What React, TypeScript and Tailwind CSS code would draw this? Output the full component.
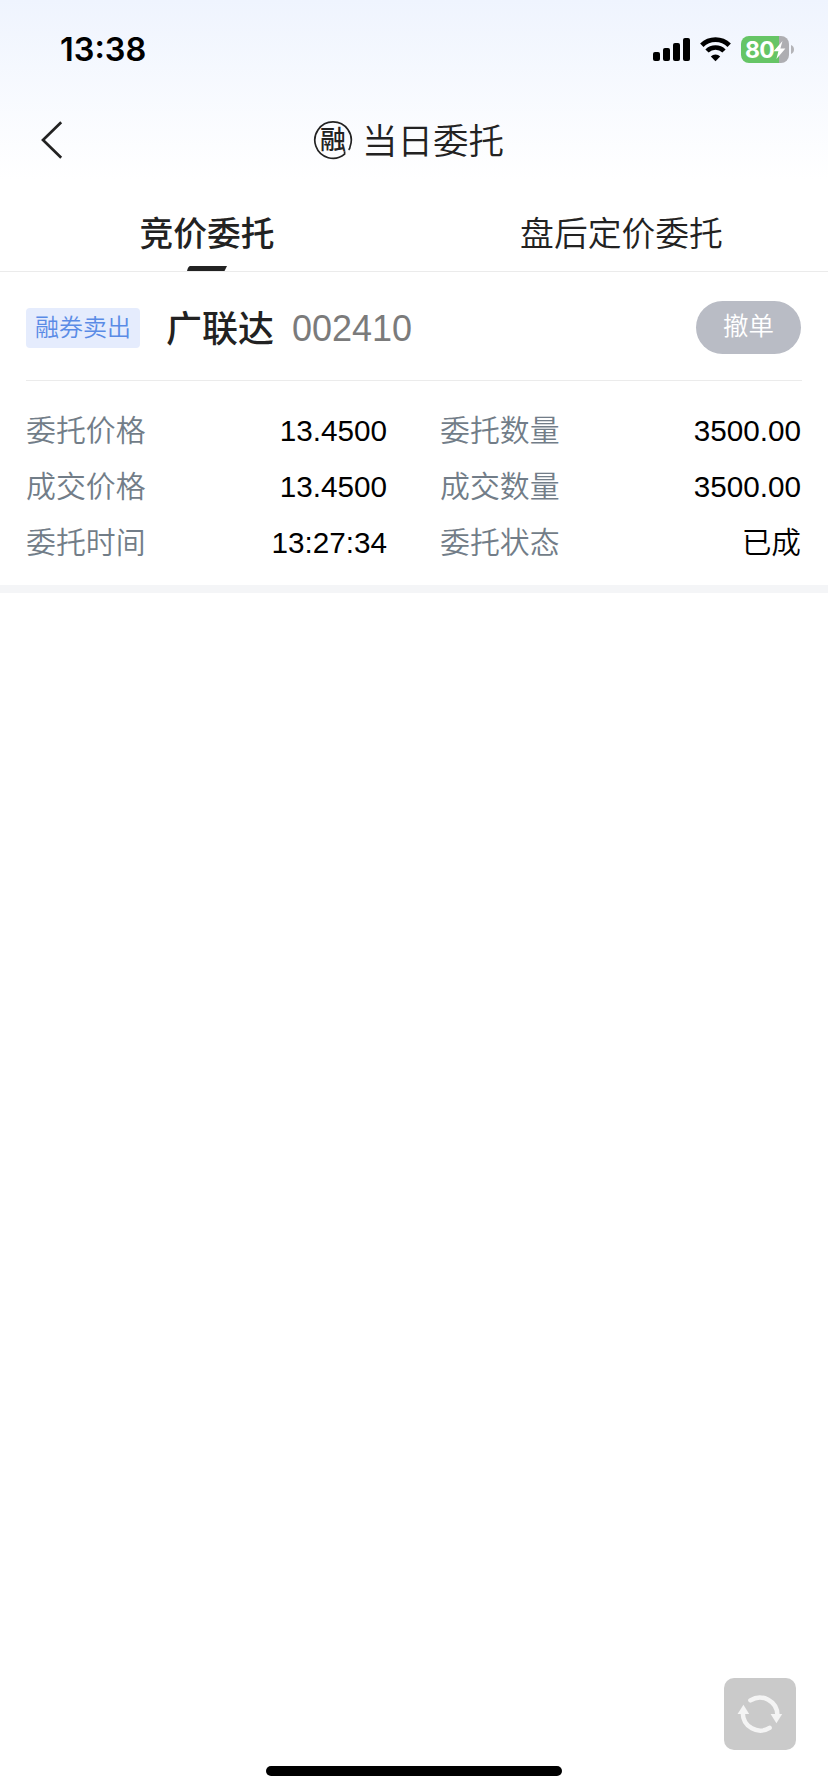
import React from "react";

const CJK = "font-['Liberation_Sans','Noto_Sans_CJK_SC',sans-serif]";

function StatusBar() {
  return (
    <div className="flex h-[100px] items-start justify-between pl-[60px] pr-[34px]">
      <span className="mt-[30px] font-['Inter',sans-serif] text-[32.5px] font-semibold leading-[40px] text-black">
        13:38
      </span>
      <div className="mt-[36px] flex items-start">
        <svg className="mt-[2px]" width="37" height="23" viewBox="0 0 37 23">
          <rect x="0" y="14" width="7" height="9" rx="2" />
          <rect x="10" y="10" width="7" height="13" rx="2" />
          <rect x="20" y="5" width="7" height="18" rx="2" />
          <rect x="30" y="0" width="7" height="23" rx="2" />
        </svg>
        <svg className="ml-[9px]" width="33" height="26" viewBox="0 0 33 26" fill="none" stroke="#000">
          <path d="M2.8 9.2A19.6 19.6 0 0 1 30.2 9.2" strokeWidth="4.8" />
          <path d="M8 15A12 12 0 0 1 25 15" strokeWidth="4.6" />
          <path d="M16.5 25.2L11.8 20.4A6.6 6.6 0 0 1 21.2 20.4Z" fill="#000" stroke="none" />
        </svg>
        <div className="ml-[9px] flex h-[27px] w-[48px] items-center overflow-hidden rounded-[8px] bg-[linear-gradient(to_right,#66c566_38px,#aeaeb2_38px)] pl-[4px]">
          <span className="pt-[1px] font-['Inter',sans-serif] text-[23px] font-bold leading-[27px] tracking-[-0.8px] text-white">
            80
          </span>
          <svg className="-ml-[1px]" width="13" height="20" viewBox="0 0 13 20">
            <path d="M9.5 1L0.6 11.2H5.4L3.4 19L12.4 8.6H7.4Z" fill="#fff" />
          </svg>
        </div>
        <svg className="ml-[2px] mt-[9px]" width="3" height="9" viewBox="0 0 3 9">
          <path d="M0 0C4 1.5 4 7.5 0 9Z" fill="#b4b4b8" />
        </svg>
      </div>
    </div>
  );
}

function CreditBadge() {
  return (
    <div className="relative h-[40px] w-[40px]">
      <svg className="absolute inset-0" width="40" height="40" viewBox="0 0 40 40" fill="none" stroke="#222" strokeWidth="1.7">
        <path d="M35.6 29.8Q37 28.6 37.2 26.2A18.2 18.2 0 1 0 31.6 34.2V31.2" />
      </svg>
      <span className="absolute left-[7px] top-[7px] text-[26px] font-medium leading-[26px] text-[#222]">融</span>
    </div>
  );
}

function Header() {
  return (
    <div className="grid h-[80px] grid-cols-[100px_1fr_100px] items-center">
      <svg className="ml-[40px]" width="24" height="40" viewBox="0 0 24 40" fill="none" stroke="#222" strokeWidth="2.7">
        <path d="M21.2 2.2L3 20L21.2 37.8" />
      </svg>
      <div className="flex items-center pl-[213px]">
        <CreditBadge />
        <h1 className="ml-[9px] whitespace-nowrap pt-[3px] text-[35.5px] font-[350] leading-[40px] text-[#222]">
          当日委托
        </h1>
      </div>
    </div>
  );
}

function Tabs() {
  return (
    <div className="grid h-[92px] grid-cols-2 border-b border-[#ebebeb] text-center text-[33.8px] leading-[40px] text-[#222]">
      <div className="flex flex-col items-center justify-between pt-[34px]">
        <span className="h-[40px] font-medium">竞价委托</span>
        <svg width="40" height="5" viewBox="0 0 40 5">
          <path d="M3 0H40L37.5 5H0Q1 0.6 3 0Z" fill="#222" />
        </svg>
      </div>
      <div className="pl-[1px] pt-[34px] font-[350]">盘后定价委托</div>
    </div>
  );
}

type Field = { label: string; value: string };

const fields: Field[] = [
  { label: "委托价格", value: "13.4500" },
  { label: "委托数量", value: "3500.00" },
  { label: "成交价格", value: "13.4500" },
  { label: "成交数量", value: "3500.00" },
  { label: "委托时间", value: "13:27:34" },
  { label: "委托状态", value: "已成" },
];

function OrderCard() {
  return (
    <div className="border-b-[8px] border-[#f4f5f7] px-[26px]">
      <div className="flex h-[109px] items-center border-b border-[#ebebeb] pr-[1px] pt-[4px]">
        <span className="flex h-[40px] w-[114px] items-center justify-center rounded-[4px] bg-[#e5ecfd] text-[24px] font-[350] leading-[40px] text-[#5a8be6]">
          融券卖出
        </span>
        <span className="ml-[26px] pt-[3px] text-[36px] font-medium leading-[44px] text-[#222]">广联达</span>
        <span className="ml-[18px] pt-[2px] text-[36px] leading-[44px] text-[#7b7b7b]">002410</span>
        <button className="mb-[1px] ml-auto flex h-[53px] w-[105px] items-center justify-center rounded-full bg-[#b9bcc5] pb-[3px] text-[25.5px] font-[350] text-white">
          撤单
        </button>
      </div>
      <div className="grid grid-cols-[361px_361px] gap-x-[53px] pb-[14px] pt-[22px]">
        {fields.map((f) => (
          <div key={f.label} className="flex h-[56px] items-center justify-between font-[350] leading-[56px]">
            <span className="text-[29.9px] text-[#727d88]">{f.label}</span>
            <span className="text-[29.7px] text-black">{f.value}</span>
          </div>
        ))}
      </div>
    </div>
  );
}

function RefreshButton() {
  return (
    <button className="mr-[32px] flex h-[72px] w-[72px] items-center justify-center self-end rounded-[10px] bg-[#cacaca]">
      <svg width="72" height="72" viewBox="0 0 72 72" fill="none" stroke="#f4f4f4" strokeWidth="4.5" strokeLinecap="round">
        <path d="M26.4 22.4A17.5 17.5 0 0 1 53.4 37" />
        <path d="M45.6 49.8A17.5 17.5 0 0 1 18.8 35" />
        <path d="M46.6 36L58.2 36L52.4 45.2Z" fill="#f4f4f4" stroke="none" />
        <path d="M13.6 36H25.2L19.4 26.8Z" fill="#f4f4f4" stroke="none" />
      </svg>
    </button>
  );
}

export default function App() {
  return (
    <div
      className={`flex h-[1792px] w-[828px] flex-col bg-white bg-[linear-gradient(to_bottom,#eff4fe_0px,#ffffff_180px)] ${CJK}`}
    >
      <StatusBar />
      <Header />
      <Tabs />
      <OrderCard />
      <div className="flex-1" />
      <RefreshButton />
      <div className="mb-[16px] mt-[16px] h-[10px] w-[296px] self-center rounded-full bg-black" />
    </div>
  );
}
